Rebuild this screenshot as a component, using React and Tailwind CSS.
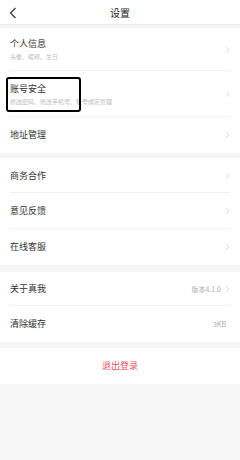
import React from "react";

const font = { fontFamily: '"Noto Sans CJK SC", "Noto Sans", sans-serif' };

function Chevron() {
  return (
    <svg width="5" height="8" viewBox="0 0 5 8" className="shrink-0">
      <path d="M1.2 1.2l2.6 2.8-2.6 2.8" fill="none" stroke="#d2d2d2" strokeWidth="0.8" />
    </svg>
  );
}

function Row({ title, sub, right, arrow = true, h = "h-[36px]", divider }) {
  return (
    <div className={`${h} relative flex items-center px-[10px]`}>
      <div className="flex-1 flex flex-col justify-center">
        <span className="text-[9px] leading-[12px] text-[#333]">{title}</span>
        {sub && (
          <span className="text-[6px] leading-[8px] text-[#bdbdbd] mt-[3px]">{sub}</span>
        )}
      </div>
      {right && <span className="text-[7px] text-[#adadad] mr-[4px]">{right}</span>}
      {arrow && <Chevron />}
      {divider && (
        <div className="absolute left-[10px] right-[10px] bottom-0 border-b border-[#f0f0f0]" />
      )}
    </div>
  );
}

export default function App() {
  return (
    <div className="w-[240px] h-[460px] bg-[#f5f5f5] flex flex-col" style={font}>
      <div className="h-[25px] bg-white border-b border-[#ececec] flex items-center relative">
        <svg width="8" height="12" viewBox="0 0 8 12" className="absolute left-[9px] top-[7px]">
          <path d="M6.5 1L1.5 6l5 5" fill="none" stroke="#333" strokeWidth="1.2" />
        </svg>
        <span className="flex-1 text-center text-[10px] text-[#222]">设置</span>
      </div>

      <div className="bg-white mt-[3px] relative">
        <Row title="个人信息" sub="头像、昵称、生日" h="h-[43px]" divider />
        <Row title="账号安全" sub="修改密码、修改手机号、账号绑定管理" h="h-[46px]" divider />
        <Row title="地址管理" />
        <div className="absolute left-[6px] top-[49px] w-[75px] h-[35px] border-2 border-black rounded-[3px]" />
      </div>

      <div className="bg-white mt-[5px]">
        <Row title="商务合作" h="h-[35px]" divider />
        <Row title="意见反馈" divider />
        <Row title="在线客服" />
      </div>

      <div className="bg-white mt-[7px]">
        <Row title="关于真我" right="版本4.1.0" h="h-[34px]" divider />
        <Row title="清除缓存" right="3KB" arrow={false} />
      </div>

      <div className="bg-white mt-[6px] h-[36px] flex items-center justify-center">
        <span className="text-[9px] text-[#f0505a]">退出登录</span>
      </div>
    </div>
  );
}
